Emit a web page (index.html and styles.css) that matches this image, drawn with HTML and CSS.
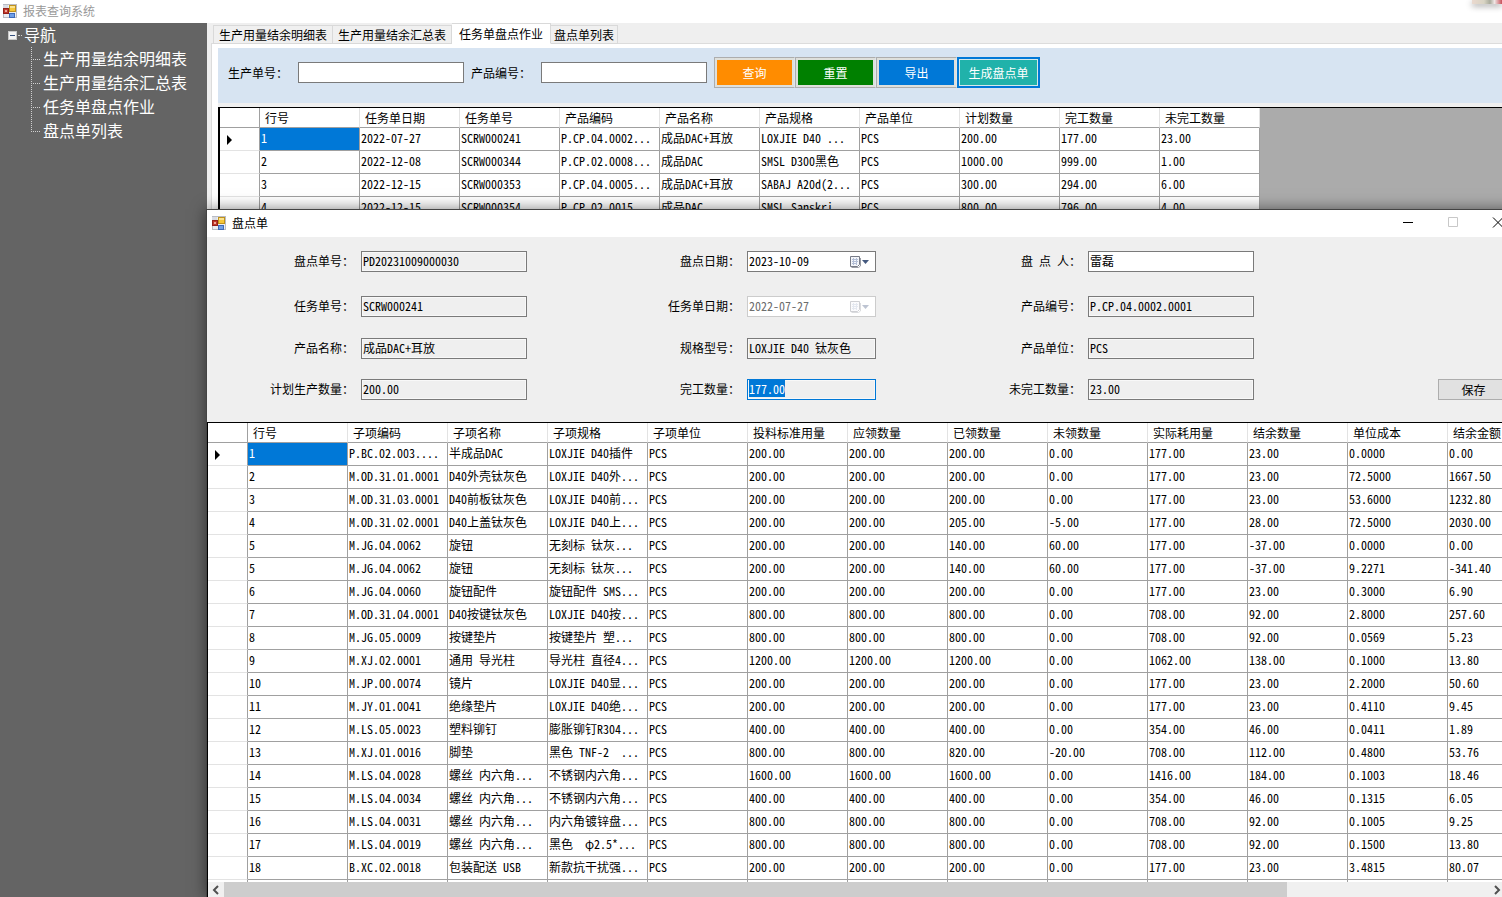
FILE: index.html
```html
<!DOCTYPE html>
<html lang="zh-CN">
<head>
<meta charset="utf-8">
<title>报表查询系统</title>
<link rel="stylesheet" href="styles.css">
</head>
<body>
<svg class="defs" aria-hidden="true">
  <symbol id="form-icon" viewBox="0 0 14 14">
    <rect x=".5" y=".5" width="13" height="13" fill="#eceef2" stroke="#b9bcc4"/>
    <rect x="0" y="1" width="5" height="3" fill="#d9dce4"/>
    <rect x="6.500" y="1.500" width="6" height="6" fill="#f5c73c" stroke="#c0921c"/>
    <rect x="7" y="2" width="5" height="2" fill="#fbe38e"/>
    <rect x=".5" y="4.500" width="5" height="5" fill="#c0392b" stroke="#94201a"/>
    <rect x="2" y="6" width="2" height="2" fill="#eda79c"/>
    <rect x="6.500" y="9.500" width="5" height="4" fill="#6f9fe8" stroke="#3f6bb8"/>
  </symbol>
  <symbol id="calendar" viewBox="0 0 20 14">
    <path d="M1.500 1.500h9v8l-2 2h-7z" fill="#f4f6fa" stroke="#777b87"/>
    <path d="M3 4.500h6M3 6.500h6M3 8.500h5M4.500 3v7M7.500 3v7" stroke="#b4bfd6" fill="none"/>
    <path d="M11.500 3v8l-2 1.500h-7" stroke="#9a9da5" fill="none"/>
    <path d="M13 5h7l-3.500 4z" fill="#44597f"/>
  </symbol>
</svg>

<header class="titlebar">
  <svg class="app-icon" aria-hidden="true"><use href="#form-icon"/></svg>
  <h1 class="app-title">报表查询系统</h1>
  <span class="widget" aria-hidden="true"></span>
</header>

<div class="workspace">
  <nav class="tree" aria-label="导航">
    <div class="tree-root"><button class="expander" aria-label="折叠"></button><span class="stub"></span><span>导航</span></div>
    <ul class="tree-list">
      <li><a href="#">生产用量结余明细表</a></li>
      <li><a href="#">生产用量结余汇总表</a></li>
      <li><a href="#">任务单盘点作业</a></li>
      <li><a href="#">盘点单列表</a></li>
    </ul>
  </nav>

  <main class="content">
    <div class="tabs" role="tablist">
      <button class="tab" role="tab">生产用量结余明细表</button>
      <button class="tab" role="tab">生产用量结余汇总表</button>
      <button class="tab active" role="tab" aria-selected="true">任务单盘点作业</button>
      <button class="tab last" role="tab">盘点单列表</button>
    </div>
    <div class="page">
      <form class="toolbar">
        <label for="q-order">生产单号：</label><input class="box query" id="q-order" type="text">
        <label for="q-product">产品编号：</label><input class="box query" id="q-product" type="text">
        <div class="actions">
          <button type="button" class="action orange">查询</button>
          <button type="button" class="action green">重置</button>
          <button type="button" class="action blue">导出</button>
          <button type="button" class="action teal">生成盘点单</button>
        </div>
      </form>
      <div class="grid-area tasks">
        <table class="grid tasks-table">
          <thead><tr><th class="rh"></th><th>行号</th><th>任务单日期</th><th>任务单号</th><th>产品编码</th><th>产品名称</th><th>产品规格</th><th>产品单位</th><th>计划数量</th><th>完工数量</th><th>未完工数量</th></tr></thead>
          <tbody>
          <tr><th class="rh current"></th><td class="selected">1</td><td>2022-07-27</td><td>SCRW000241</td><td>P.CP.04.0002...</td><td>成品DAC+耳放</td><td>LOXJIE D40 ...</td><td>PCS</td><td>200.00</td><td>177.00</td><td>23.00</td></tr>
          <tr><th class="rh"></th><td>2</td><td>2022-12-08</td><td>SCRW000344</td><td>P.CP.02.0008...</td><td>成品DAC</td><td>SMSL D300黑色</td><td>PCS</td><td>1000.00</td><td>999.00</td><td>1.00</td></tr>
          <tr><th class="rh"></th><td>3</td><td>2022-12-15</td><td>SCRW000353</td><td>P.CP.04.0005...</td><td>成品DAC+耳放</td><td>SABAJ A20d(2...</td><td>PCS</td><td>300.00</td><td>294.00</td><td>6.00</td></tr>
          <tr><th class="rh"></th><td>4</td><td>2022-12-15</td><td>SCRW000354</td><td>P.CP.02.0015...</td><td>成品DAC</td><td>SMSL Sanskri...</td><td>PCS</td><td>800.00</td><td>796.00</td><td>4.00</td></tr>
          </tbody>
        </table>
      </div>
    </div>
  </main>
</div>

<section class="dialog" role="dialog" aria-labelledby="dlg-title">
  <div class="dialog-bar">
    <svg class="app-icon" aria-hidden="true"><use href="#form-icon"/></svg>
    <h2 class="dialog-title" id="dlg-title">盘点单</h2>
    <button class="win" aria-label="最小化"><svg viewBox="0 0 12 12"><path d="M1 5.500h10" stroke="#000"/></svg></button>
    <button class="win" aria-label="最大化" disabled><svg viewBox="0 0 12 12"><path d="M1.500 .5h9v9h-9z" fill="none" stroke="#c8c8c8"/></svg></button>
    <button class="win" aria-label="关闭"><svg viewBox="0 0 12 12"><path d="M1 .5l10 10M11 .5L1 10.500" stroke="#000"/></svg></button>
  </div>

  <form class="fields">
    <label for="f1">盘点单号：</label><input class="box" id="f1" value="PD20231009000030" readonly>
    <label for="f2">盘点日期：</label><div class="date"><input class="box" id="f2" value="2023-10-09"><svg aria-hidden="true"><use href="#calendar"/></svg></div>
    <label for="f3">盘 点 人：</label><input class="box" id="f3" value="雷磊">
    <span></span>
    <label for="f4">任务单号：</label><input class="box" id="f4" value="SCRW000241" readonly>
    <label for="f5">任务单日期：</label><div class="date off"><input class="box" id="f5" value="2022-07-27" disabled><svg aria-hidden="true"><use href="#calendar"/></svg></div>
    <label for="f6">产品编号：</label><input class="box" id="f6" value="P.CP.04.0002.0001" readonly>
    <span></span>
    <label for="f7">产品名称：</label><input class="box" id="f7" value="成品DAC+耳放" readonly>
    <label for="f8">规格型号：</label><input class="box" id="f8" value="LOXJIE D40 钛灰色" readonly>
    <label for="f9">产品单位：</label><input class="box" id="f9" value="PCS" readonly>
    <span></span>
    <label for="f10">计划生产数量：</label><input class="box" id="f10" value="200.00" readonly>
    <label for="f11">完工数量：</label><input class="box" id="f11" value="177.00" readonly>
    <label for="f12">未完工数量：</label><input class="box" id="f12" value="23.00" readonly>
    <button type="button" class="save">保存</button>
  </form>

  <div class="grid-area items">
    <table class="grid items-table">
      <thead><tr><th class="rh"></th><th>行号</th><th>子项编码</th><th>子项名称</th><th>子项规格</th><th>子项单位</th><th>投料标准用量</th><th>应领数量</th><th>已领数量</th><th>未领数量</th><th>实际耗用量</th><th>结余数量</th><th>单位成本</th><th>结余金额</th></tr></thead>
      <tbody>
      <tr><th class="rh current"></th><td class="selected">1</td><td>P.BC.02.003....</td><td>半成品DAC</td><td>LOXJIE D40插件</td><td>PCS</td><td>200.00</td><td>200.00</td><td>200.00</td><td>0.00</td><td>177.00</td><td>23.00</td><td>0.0000</td><td>0.00</td></tr>
      <tr><th class="rh"></th><td>2</td><td>M.OD.31.01.0001</td><td>D40外壳钛灰色</td><td>LOXJIE D40外...</td><td>PCS</td><td>200.00</td><td>200.00</td><td>200.00</td><td>0.00</td><td>177.00</td><td>23.00</td><td>72.5000</td><td>1667.50</td></tr>
      <tr><th class="rh"></th><td>3</td><td>M.OD.31.03.0001</td><td>D40前板钛灰色</td><td>LOXJIE D40前...</td><td>PCS</td><td>200.00</td><td>200.00</td><td>200.00</td><td>0.00</td><td>177.00</td><td>23.00</td><td>53.6000</td><td>1232.80</td></tr>
      <tr><th class="rh"></th><td>4</td><td>M.OD.31.02.0001</td><td>D40上盖钛灰色</td><td>LOXJIE D40上...</td><td>PCS</td><td>200.00</td><td>200.00</td><td>205.00</td><td>-5.00</td><td>177.00</td><td>28.00</td><td>72.5000</td><td>2030.00</td></tr>
      <tr><th class="rh"></th><td>5</td><td>M.JG.04.0062</td><td>旋钮</td><td>无刻标 钛灰...</td><td>PCS</td><td>200.00</td><td>200.00</td><td>140.00</td><td>60.00</td><td>177.00</td><td>-37.00</td><td>0.0000</td><td>0.00</td></tr>
      <tr><th class="rh"></th><td>5</td><td>M.JG.04.0062</td><td>旋钮</td><td>无刻标 钛灰...</td><td>PCS</td><td>200.00</td><td>200.00</td><td>140.00</td><td>60.00</td><td>177.00</td><td>-37.00</td><td>9.2271</td><td>-341.40</td></tr>
      <tr><th class="rh"></th><td>6</td><td>M.JG.04.0060</td><td>旋钮配件</td><td>旋钮配件 SMS...</td><td>PCS</td><td>200.00</td><td>200.00</td><td>200.00</td><td>0.00</td><td>177.00</td><td>23.00</td><td>0.3000</td><td>6.90</td></tr>
      <tr><th class="rh"></th><td>7</td><td>M.OD.31.04.0001</td><td>D40按键钛灰色</td><td>LOXJIE D40按...</td><td>PCS</td><td>800.00</td><td>800.00</td><td>800.00</td><td>0.00</td><td>708.00</td><td>92.00</td><td>2.8000</td><td>257.60</td></tr>
      <tr><th class="rh"></th><td>8</td><td>M.JG.05.0009</td><td>按键垫片</td><td>按键垫片 塑...</td><td>PCS</td><td>800.00</td><td>800.00</td><td>800.00</td><td>0.00</td><td>708.00</td><td>92.00</td><td>0.0569</td><td>5.23</td></tr>
      <tr><th class="rh"></th><td>9</td><td>M.XJ.02.0001</td><td>通用 导光柱</td><td>导光柱 直径4...</td><td>PCS</td><td>1200.00</td><td>1200.00</td><td>1200.00</td><td>0.00</td><td>1062.00</td><td>138.00</td><td>0.1000</td><td>13.80</td></tr>
      <tr><th class="rh"></th><td>10</td><td>M.JP.00.0074</td><td>镜片</td><td>LOXJIE D40显...</td><td>PCS</td><td>200.00</td><td>200.00</td><td>200.00</td><td>0.00</td><td>177.00</td><td>23.00</td><td>2.2000</td><td>50.60</td></tr>
      <tr><th class="rh"></th><td>11</td><td>M.JY.01.0041</td><td>绝缘垫片</td><td>LOXJIE D40绝...</td><td>PCS</td><td>200.00</td><td>200.00</td><td>200.00</td><td>0.00</td><td>177.00</td><td>23.00</td><td>0.4110</td><td>9.45</td></tr>
      <tr><th class="rh"></th><td>12</td><td>M.LS.05.0023</td><td>塑料铆钉</td><td>膨胀铆钉R304...</td><td>PCS</td><td>400.00</td><td>400.00</td><td>400.00</td><td>0.00</td><td>354.00</td><td>46.00</td><td>0.0411</td><td>1.89</td></tr>
      <tr><th class="rh"></th><td>13</td><td>M.XJ.01.0016</td><td>脚垫</td><td>黑色 TNF-2  ...</td><td>PCS</td><td>800.00</td><td>800.00</td><td>820.00</td><td>-20.00</td><td>708.00</td><td>112.00</td><td>0.4800</td><td>53.76</td></tr>
      <tr><th class="rh"></th><td>14</td><td>M.LS.04.0028</td><td>螺丝 内六角...</td><td>不锈钢内六角...</td><td>PCS</td><td>1600.00</td><td>1600.00</td><td>1600.00</td><td>0.00</td><td>1416.00</td><td>184.00</td><td>0.1003</td><td>18.46</td></tr>
      <tr><th class="rh"></th><td>15</td><td>M.LS.04.0034</td><td>螺丝 内六角...</td><td>不锈钢内六角...</td><td>PCS</td><td>400.00</td><td>400.00</td><td>400.00</td><td>0.00</td><td>354.00</td><td>46.00</td><td>0.1315</td><td>6.05</td></tr>
      <tr><th class="rh"></th><td>16</td><td>M.LS.04.0031</td><td>螺丝 内六角...</td><td>内六角镀锌盘...</td><td>PCS</td><td>800.00</td><td>800.00</td><td>800.00</td><td>0.00</td><td>708.00</td><td>92.00</td><td>0.1005</td><td>9.25</td></tr>
      <tr><th class="rh"></th><td>17</td><td>M.LS.04.0019</td><td>螺丝 内六角...</td><td>黑色  φ2.5*...</td><td>PCS</td><td>800.00</td><td>800.00</td><td>800.00</td><td>0.00</td><td>708.00</td><td>92.00</td><td>0.1500</td><td>13.80</td></tr>
      <tr><th class="rh"></th><td>18</td><td>B.XC.02.0018</td><td>包装配送 USB</td><td>新款抗干扰强...</td><td>PCS</td><td>200.00</td><td>200.00</td><td>200.00</td><td>0.00</td><td>177.00</td><td>23.00</td><td>3.4815</td><td>80.07</td></tr>
      <tr><th class="rh"></th><td></td><td></td><td></td><td></td><td></td><td></td><td></td><td></td><td></td><td></td><td></td><td></td><td></td></tr>
      </tbody>
    </table>
  </div>
  <div class="scrollbar">
    <button class="arrow" aria-label="向左滚动"><svg viewBox="0 0 8 10"><path d="M6 1L2 5l4 4" fill="none" stroke="#505050" stroke-width="2"/></svg></button>
    <div class="track"><div class="thumb"></div></div>
    <button class="arrow" aria-label="向右滚动"><svg viewBox="0 0 8 10"><path d="M2 1l4 4-4 4" fill="none" stroke="#505050" stroke-width="2"/></svg></button>
  </div>
</section>
<script src="app.js"></script>
</body>
</html>
```

FILE: styles.css
```css
* { box-sizing: border-box; }

html, body { height: 100%; }

body {
  margin: 0;
  overflow: hidden;
  display: flex;
  flex-direction: column;
  position: relative;
  background: #fff;
  color: #000;
  font: 12px/16px "Noto Sans Mono CJK SC", "Noto Sans CJK SC", monospace;
}

button, input { font: inherit; color: inherit; margin: 0; border-radius: 0; }
button { padding: 0; border: 0; background: none; }
h1, h2 { margin: 0; font-weight: 400; font-size: 12px; }

.defs { position: absolute; width: 0; height: 0; }
.app-icon { width: 14px; height: 14px; flex: none; }

/* Main window title */
.titlebar {
  flex: none;
  height: 23px;
  display: flex;
  align-items: center;
  gap: 6px;
  padding: 0 0 1px 3px;
  background: #fff;
}
.app-title { color: #999; }
.widget {
  width: 30px;
  height: 4px;
  margin-left: auto;
  align-self: flex-start;
  background: linear-gradient(90deg, #ead9cf, #d8d4c4 40%, #a9ab9c 60%, #efe6e4 75%, #c8505a);
  box-shadow: 0 2px 6px #999;
}

.workspace { flex: 1; min-height: 0; display: flex; background: #efefef; }

/* Navigation tree */
.tree {
  width: 207px;
  flex: none;
  background: #646464;
  color: #fff;
  font: 16px/22px "Noto Sans CJK SC", sans-serif;
}
.tree-root { display: flex; align-items: center; height: 24px; padding-left: 8px; }
.expander {
  width: 9px;
  height: 9px;
  border: 1px solid #c8c8c8;
  background: linear-gradient(#34507e, #34507e) center / 5px 1px no-repeat #f4f4f4;
}
.stub { width: 4px; margin: 0 2px 0 1px; border-top: 1px dotted #d0d0d0; }
.tree-list { list-style: none; margin: 0 0 0 31px; padding: 0; }
.tree-list li {
  display: flex;
  align-items: center;
  gap: 3px;
  height: 24px;
  background: repeating-linear-gradient(#d0d0d0 0 1px, transparent 1px 2px) 0 0 / 1px 100% no-repeat;
}
.tree-list li:last-child { background-size: 1px 12px; }
.tree-list li::before { content: ""; width: 9px; border-top: 1px dotted #d0d0d0; }
.tree-root span:last-child, .tree-list a { padding-bottom: 2px; color: inherit; text-decoration: none; }

/* Tabs */
.content { flex: 1; min-width: 0; display: flex; flex-direction: column; padding-left: 4px; }
.tabs {
  display: flex;
  align-items: flex-end;
  height: 21px;
  padding-left: 2px;
  box-shadow: inset 0 -1px #dcdcdc;
  flex: none;
}
.tab {
  height: 19px;
  padding: 0 5px;
  border: 1px solid #d9d9d9;
  border-left-width: 0;
  background: #f0f0f0;
}
.tab:first-child { border-left-width: 1px; }
.tab.active { height: 21px; padding: 0 7px; border-bottom-color: #fff; background: #fff; }
.tab.last { padding: 0 3px; }
.page {
  flex: 1;
  min-height: 0;
  display: flex;
  flex-direction: column;
  padding: 4px 0 0 6px;
  border-left: 1px solid #dcdcdc;
  background: #fff;
}

/* Query bar */
.toolbar {
  display: flex;
  align-items: center;
  height: 55px;
  padding: 0 0 6px 10px;
  background: #d7e4f2;
  flex: none;
}
.box {
  width: 166px;
  height: 21px;
  padding: 0 1px 3px;
  border: 1px solid #7a7a7a;
  background: #fff;
  outline: 0;
}
.query { margin: 0 7px 0 10px; }
.actions { display: flex; }
.action {
  width: 81px;
  height: 31px;
  border: 1px solid #adadad;
  border-right-color: #dfe6ec;
  box-shadow: inset 0 0 0 2px #dfe0dc;
  color: #fff;
}
.orange { background: #ff8c00; }
.green { background: #008000; }
.blue { background: #0078d7; }
.teal { width: 83px; border: 2px solid #0078d7; background: #20b2aa; box-shadow: inset 0 0 0 1px #d5e8ea; }

/* Data grids */
.grid-area { overflow: hidden; border: 1px solid #000; border-width: 1px 0 0 1px; flex: 1; min-height: 0; }
.tasks { margin-top: 4px; border-left-width: 2px; background: #ababab; box-shadow: 0 -4px #efefef; }
.items { background: #fff; }
.grid { border-collapse: separate; border-spacing: 0; table-layout: fixed; background: #fff; }
.tasks-table { width: 1040px; }
.items-table { width: 1340px; }
.grid th, .grid td {
  height: 23px;
  padding: 0 0 2px 1px;
  overflow: hidden;
  border: 1px solid #a0a0a0;
  border-width: 0 1px 1px 0;
  white-space: pre;
  text-align: left;
  font-weight: 400;
}
.grid thead th { height: 20px; padding: 0 0 0 5px; border-right-color: #e3e3e3; }
.grid .rh, .grid thead .rh { width: 40px; border-right-color: #a0a0a0; }
.grid tbody .rh { border-bottom-color: #e3e3e3; }
.grid .current::before {
  content: "";
  display: block;
  width: 0;
  margin: 4px 0 0 6px;
  border: 5px solid transparent;
  border-left-color: #000;
  border-right-width: 0;
}
.grid .selected { background: #0078d7; color: #fff; }

/* Stocktake window, floating over the main one and past its right edge */
.dialog {
  position: absolute;
  top: 209px;
  left: 206px;
  right: -20px;
  bottom: 0;
  display: flex;
  flex-direction: column;
  border: 1px solid #444;
  border-width: 1px 0 0 1px;
  background: #efefef;
  box-shadow: 0 0 14px rgba(0, 0, 0, .5);
}
.dialog-bar { display: flex; align-items: center; height: 27px; padding: 0 2px 1px 5px; background: #fff; flex: none; }
.dialog-title { margin: 0 auto 0 6px; }
.win { width: 45px; height: 26px; display: grid; place-items: center; }
.win svg { width: 12px; height: 12px; }

.fields {
  display: grid;
  grid-template-columns: 147px 166px 206px 129px 198px 166px 1fr;
  grid-template-rows: 24px 21px 20px 21px;
  gap: 21px 7px;
  align-items: start;
  padding: 14px 13px 22px 0;
  flex: none;
}
.fields label { line-height: 19px; text-align: right; white-space: pre; }
.fields .box { width: 100%; }
.box:read-only { background: #efefef; box-shadow: inset 0 0 0 1px #f8f8f8; }
.box:read-only:focus { border-color: #0078d7; }
.box::selection { background: #0078d7; color: #fff; }
.date { display: flex; align-items: center; height: 21px; border: 1px solid #7a7a7a; background: #fff; }
.fields .date .box { flex: 1; min-width: 0; height: 19px; padding: 0 0 2px 1px; border: 0; background: none; box-shadow: none; }
.date svg { width: 20px; height: 14px; margin-right: 6px; flex: none; }
.date.off { border-color: #ccc; color: #6d6d6d; }
.date.off svg { opacity: .35; }
.save { justify-self: end; width: 71px; height: 21px; border: 1px solid #adadad; background: #e1e1e1; }

.scrollbar { display: flex; height: 15px; padding-right: 17px; background: #f0f0f0; border-left: 1px solid #000; flex: none; }
.arrow { width: 16px; display: grid; place-items: center; }
.arrow svg { width: 8px; height: 10px; }
.track { flex: 1; }
.thumb { width: 84%; height: 100%; background: #cdcdcd; }
```

FILE: app.js
```js
// The finished quantity is focused and selected when the window opens.
document.getElementById("f11").select();
```
